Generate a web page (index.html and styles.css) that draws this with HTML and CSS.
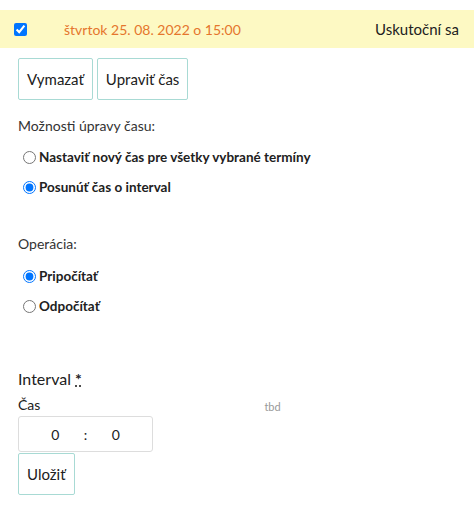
FILE: index.html
```html
<!DOCTYPE html>
<html lang="sk">
<head>
  <meta charset="UTF-8">
  <meta name="viewport" content="width=device-width, initial-scale=1.0">
  <title>Úprava termínov</title>
  <link rel="stylesheet" href="styles.css">
</head>
<body>
  <div class="termin">
    <input type="checkbox" class="vyber" checked>
    <span class="datum">štvrtok 25. 08. 2022 o 15:00</span>
    <span class="stav">Uskutoční sa</span>
  </div>

  <div class="akcie">
    <button class="tlacidlo">Vymazať</button>
    <button class="tlacidlo">Upraviť čas</button>
  </div>

  <form class="uprava">
    <p class="nadpis">Možnosti úpravy času:</p>
    <label class="volba"><input type="radio" name="moznost"> Nastaviť nový čas pre všetky vybrané termíny</label>
    <label class="volba"><input type="radio" name="moznost" checked> Posunúť čas o interval</label>

    <p class="nadpis operacia">Operácia:</p>
    <label class="volba"><input type="radio" name="operacia" checked> Pripočítať</label>
    <label class="volba"><input type="radio" name="operacia"> Odpočítať</label>

    <div class="interval">
      <div class="interval-nadpis">Interval <abbr title="povinné">*</abbr></div>
      <div class="cas-riadok">
        <span class="cas-label">Čas</span>
        <span class="tbd">tbd</span>
      </div>
      <div class="cas">
        <span>0</span>
        <span>:</span>
        <span>0</span>
      </div>
      <button type="submit" class="tlacidlo">Uložiť</button>
    </div>
  </form>
</body>
</html>
```

FILE: styles.css
```css
body {
  margin: 0;
  font-family: Lato, "Open Sans", sans-serif;
  font-size: 15px;
  color: #212121;
  background-color: #ffffff;
}
.termin {
  margin-top: 10px;
  height: 38px;
  display: flex;
  align-items: center;
  padding: 0 15px 0 14px;
  background-color: #fdf9c3;
}
.vyber {
  width: 13px;
  height: 13px;
  margin: 0;
}
.datum {
  margin-left: 37px;
  font-size: 14px;
  color: #e5762d;
}
.stav {
  margin-left: auto;
}
.akcie {
  display: flex;
  gap: 4px;
  padding: 10px 18px 0;
}
.tlacidlo {
  height: 42px;
  padding: 0 8px;
  font-family: inherit;
  font-size: 15px;
  color: #212121;
  background-color: #ffffff;
  border: 1px solid #a8dad4;
  border-radius: 2px;
}
.uprava {
  padding: 0 18px;
}
.nadpis {
  margin: 17px 0 8px;
  font-size: 14px;
  color: #333;
}
.operacia {
  margin-top: 33px;
  margin-bottom: 9px;
}
.volba {
  display: flex;
  align-items: center;
  height: 30px;
  padding-left: 5px;
  font-weight: bold;
  font-size: 13.5px;
}
.volba input {
  margin: 0 3px 0 0;
  width: 13px;
  height: 13px;
}
.interval {
  margin-top: 48px;
}
.interval-nadpis {
  font-size: 16px;
}
.interval-nadpis abbr {
  text-decoration: underline dotted;
  font-weight: bold;
}
.cas-riadok {
  display: flex;
  align-items: flex-end;
  margin-top: 8px;
}
.cas-label {
  font-size: 14px;
}
.tbd {
  margin-left: 224px;
  font-size: 11px;
  color: #999;
}
.cas {
  display: flex;
  justify-content: space-around;
  align-items: center;
  width: 135px;
  height: 36px;
  margin-top: 3px;
  padding: 0 20px;
  box-sizing: border-box;
  border: 1px solid #ddd;
  border-radius: 3px;
  font-size: 14px;
}
.interval .tlacidlo {
  margin-top: 1px;
}
```
